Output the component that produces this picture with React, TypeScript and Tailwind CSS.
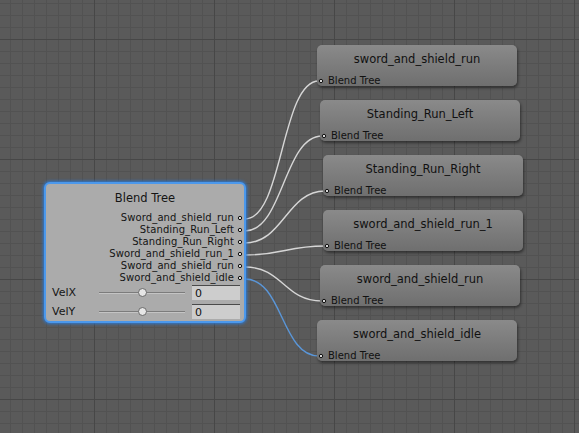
import type { ReactNode } from 'react';

const outputs = [
  'Sword_and_shield_run',
  'Standing_Run_Left',
  'Standing_Run_Right',
  'Sword_and_shield_run_1',
  'Sword_and_shield_run',
  'Sword_and_shield_idle',
];

const clips = [
  { name: 'sword_and_shield_run', left: 317, top: 45 },
  { name: 'Standing_Run_Left', left: 320, top: 100 },
  { name: 'Standing_Run_Right', left: 323, top: 155 },
  { name: 'sword_and_shield_run_1', left: 323, top: 210 },
  { name: 'sword_and_shield_run', left: 320, top: 265 },
  { name: 'sword_and_shield_idle', left: 317, top: 320 },
];

const W = 579;
const H = 433;

function range(start: number, step: number, end: number) {
  const values: number[] = [];
  for (let v = start; v < end; v += step) values.push(v);
  return values;
}

function GridAndEdges() {
  const minorX = range(10, 12, W);
  const minorY = range(3, 12, H);
  const majorX = range(94, 120, W);
  const majorY = range(39, 120, H);

  return (
    <svg className="absolute inset-0" width={W} height={H} viewBox={`0 0 ${W} ${H}`}>
      <rect width={W} height={H} fill="#5a5a5a" />
      <g stroke="#525252" strokeWidth="1" shapeRendering="crispEdges">
        {minorX.map((x) => (
          <line key={`mx${x}`} x1={x + 0.5} y1={0} x2={x + 0.5} y2={H} />
        ))}
        {minorY.map((y) => (
          <line key={`my${y}`} x1={0} y1={y + 0.5} x2={W} y2={y + 0.5} />
        ))}
      </g>
      <g stroke="#474747" strokeWidth="1" shapeRendering="crispEdges">
        {majorX.map((x) => (
          <line key={`Mx${x}`} x1={x + 0.5} y1={0} x2={x + 0.5} y2={H} />
        ))}
        {majorY.map((y) => (
          <line key={`My${y}`} x1={0} y1={y + 0.5} x2={W} y2={y + 0.5} />
        ))}
      </g>
      <g fill="none" strokeWidth="1.4">
        {clips.map((clip, i) => {
          const sx = 245;
          const sy = 219 + i * 12;
          const ex = clip.left + 2;
          const ey = clip.top + 36;
          const d = 38;
          return (
            <path
              key={i}
              d={`M${sx} ${sy} C${sx + d} ${sy} ${ex - d} ${ey} ${ex} ${ey}`}
              stroke={i === 5 ? '#5a96d8' : '#d6d6d6'}
            />
          );
        })}
      </g>
    </svg>
  );
}

function Port({ className = '' }: { className?: string }) {
  return (
    <svg width="6" height="6" viewBox="0 0 6 6" className={className}>
      <circle cx="3" cy="3" r="1.7" fill="#d8d8d8" stroke="#111" strokeWidth="1" />
    </svg>
  );
}

function SliderRow({ label, children }: { label: string; children?: ReactNode }) {
  return (
    <div className="flex h-[15px] items-center pl-[6px]">
      <span className="w-[47px] text-[11px] leading-none text-[#161616]">{label}</span>
      <div className="relative h-[15px] w-[86px]">
        <div className="absolute left-0 right-0 top-[7px] h-[2px] border-b border-[#c4c4c4] bg-[#7c7c7c]" />
        <div className="absolute left-[39px] top-[3px] h-[9px] w-[9px] rounded-full border border-[#6a6a6a] bg-[#e6e6e6]" />
      </div>
      <div className="ml-[7px] flex h-[15px] w-[48px] items-center border-t border-[#4a4a4a] bg-[#cdcdcd] pl-[3px] text-[11px] leading-none text-[#111]">
        0
      </div>
      {children}
    </div>
  );
}

function BlendTreeNode() {
  return (
    <div className="absolute left-[44px] top-[182px] h-[141px] w-[202px] rounded-[6px] border-2 border-[#4b98ec] bg-[#ababab] shadow-[0_0_3px_1px_#2d78d0]">
      <p className="pt-[7px] text-center text-[11.5px] leading-[14px] text-[#141414]">Blend Tree</p>
      <div className="mt-[7px]">
        {outputs.map((name, i) => (
          <div key={i} className="flex h-[12px] items-center justify-end pr-[1px]">
            <span className="text-[10px] leading-none tracking-[0.1px] text-[#141414]">{name}</span>
            <Port className="ml-[3px]" />
          </div>
        ))}
      </div>
      <div className="mt-[1px]">
        <SliderRow label="VelX" />
      </div>
      <div className="mt-[4px]">
        <SliderRow label="VelY" />
      </div>
    </div>
  );
}

function ClipNode({ name, left, top }: { name: string; left: number; top: number }) {
  return (
    <div
      className="absolute h-[41px] w-[200px] rounded-[5px] bg-gradient-to-b from-[#8a8a8a] to-[#6f6f6f] shadow-[1px_2px_3px_rgba(0,0,0,0.45)]"
      style={{ left, top }}
    >
      <p className="pt-[7px] text-center text-[11.5px] leading-[14px] text-[#111]">{name}</p>
      <div className="mt-[9px] flex h-[12px] items-center pl-[1px]">
        <Port />
        <span className="ml-[4px] text-[10px] leading-none text-[#111]">Blend Tree</span>
      </div>
    </div>
  );
}

export default function App() {
  return (
    <div className="relative h-[433px] w-[579px] overflow-hidden bg-[#5a5a5a] font-['DejaVu_Sans',sans-serif]">
      <GridAndEdges />
      <BlendTreeNode />
      {clips.map((clip, i) => (
        <ClipNode key={i} {...clip} />
      ))}
    </div>
  );
}
